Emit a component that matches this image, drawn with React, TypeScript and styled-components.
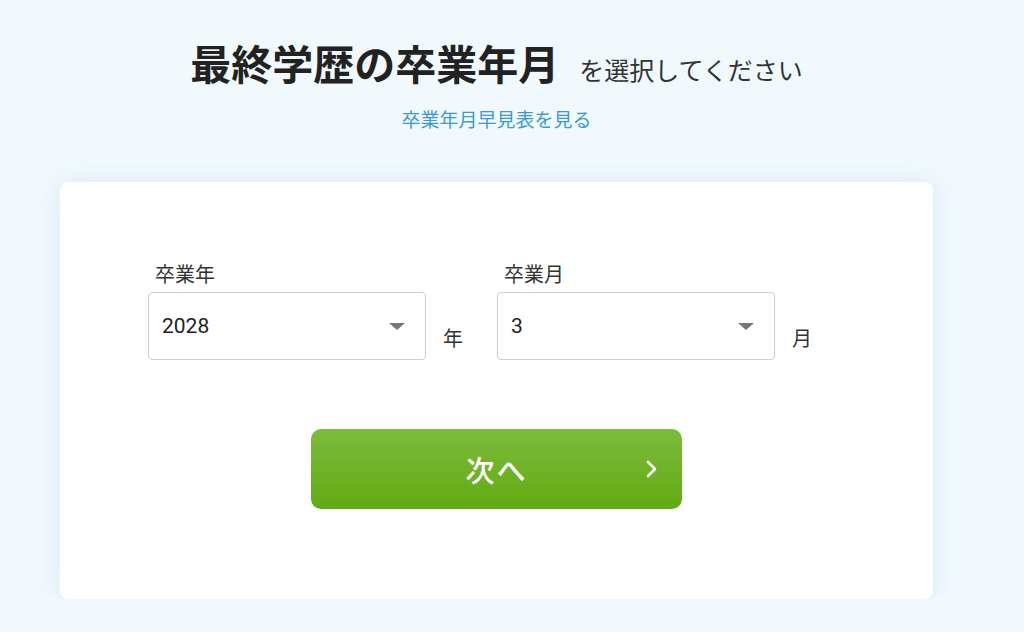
import React, { useState } from 'react';
import styled, { createGlobalStyle } from 'styled-components';

const GlobalStyle = createGlobalStyle`
  html, body {
    margin: 0;
    padding: 0;
    background: #f1f9fd;
  }
  body {
    font-family: "Noto Sans CJK JP", "Noto Sans", sans-serif;
    color: #333;
  }
`;

const Page = styled.div`
  width: 873px;
  margin-left: 60px;
  padding-top: 32px;
`;

const Heading = styled.h1`
  margin: 0;
  display: flex;
  justify-content: center;
  align-items: baseline;
  gap: 20px;
  font-size: 41px;
  font-weight: 700;
  line-height: 60px;
  color: #222;
`;

const SubHeading = styled.span`
  font-size: 25px;
  font-weight: 400;
  color: #333;
`;

const LinkRow = styled.div`
  text-align: center;
  margin-top: 7px;
`;

const ChartLink = styled.a`
  font-size: 19px;
  color: #3b99d4;
  text-decoration: none;
  line-height: 26px;
`;

const Card = styled.div`
  margin-top: 50px;
  background: #fff;
  border-radius: 8px;
  box-shadow: 0 0 24px rgba(170, 205, 220, 0.35);
  padding: 80px 0 90px 88px;
`;

const FieldRow = styled.div`
  display: flex;
  align-items: flex-end;
`;

const FieldGroup = styled.div`
  display: flex;
  align-items: flex-end;
  margin-right: 34px;
`;

const Field = styled.div`
  display: flex;
  flex-direction: column;
  gap: 6px;
`;

const Label = styled.label`
  font-size: 20px;
  line-height: 24px;
  color: #333;
  padding-left: 7px;
`;

const SelectBox = styled.div`
  position: relative;
  width: 278px;
  height: 68px;
  box-sizing: border-box;
  border: 1.5px solid #cfcfcf;
  border-radius: 4px;
  display: flex;
  align-items: center;
  padding: 0 13px;
  font-family: Roboto, "Noto Sans CJK JP", sans-serif;
  font-size: 21px;
  color: #222;
  cursor: pointer;
`;

const Caret = styled.span`
  position: absolute;
  right: 20px;
  top: 30px;
  width: 0;
  height: 0;
  border-left: 8px solid transparent;
  border-right: 8px solid transparent;
  border-top: 7px solid #777;
`;

const Unit = styled.span`
  font-size: 20px;
  line-height: 24px;
  margin-left: 17px;
  padding-bottom: 10px;
  color: #333;
`;

const ButtonRow = styled.div`
  display: flex;
  justify-content: center;
  margin-top: 69px;
  padding-right: 88px;
`;

const NextButton = styled.button`
  position: relative;
  width: 371px;
  height: 80px;
  border: none;
  border-radius: 10px;
  background: linear-gradient(180deg, #7cbb3c 0%, #62ab12 100%);
  color: #fff;
  font-family: "Noto Sans CJK JP", sans-serif;
  font-size: 29px;
  font-weight: 500;
  cursor: pointer;
  letter-spacing: 2px;
`;

const Chevron = styled.svg`
  position: absolute;
  right: 24px;
  top: 31px;
`;

const SelectField: React.FC<{ label: string; value: string; unit: string }> = ({ label, value, unit }) => (
  <FieldGroup>
    <Field>
      <Label>{label}</Label>
      <SelectBox>
        {value}
        <Caret />
      </SelectBox>
    </Field>
    <Unit>{unit}</Unit>
  </FieldGroup>
);

const App: React.FC = () => {
  const [year] = useState('2028');
  const [month] = useState('3');

  return (
    <>
      <GlobalStyle />
      <Page>
        <Heading>
          最終学歴の卒業年月
          <SubHeading>を選択してください</SubHeading>
        </Heading>
        <LinkRow>
          <ChartLink href="#">卒業年月早見表を見る</ChartLink>
        </LinkRow>
        <Card>
          <FieldRow>
            <SelectField label="卒業年" value={year} unit="年" />
            <SelectField label="卒業月" value={month} unit="月" />
          </FieldRow>
          <ButtonRow>
            <NextButton>
              次へ
              <Chevron width="12" height="18" viewBox="0 0 12 18">
                <path d="M2 2 L9 9 L2 16" fill="none" stroke="#fff" strokeWidth="2.6" strokeLinecap="round" strokeLinejoin="round" />
              </Chevron>
            </NextButton>
          </ButtonRow>
        </Card>
      </Page>
    </>
  );
};

export default App;
